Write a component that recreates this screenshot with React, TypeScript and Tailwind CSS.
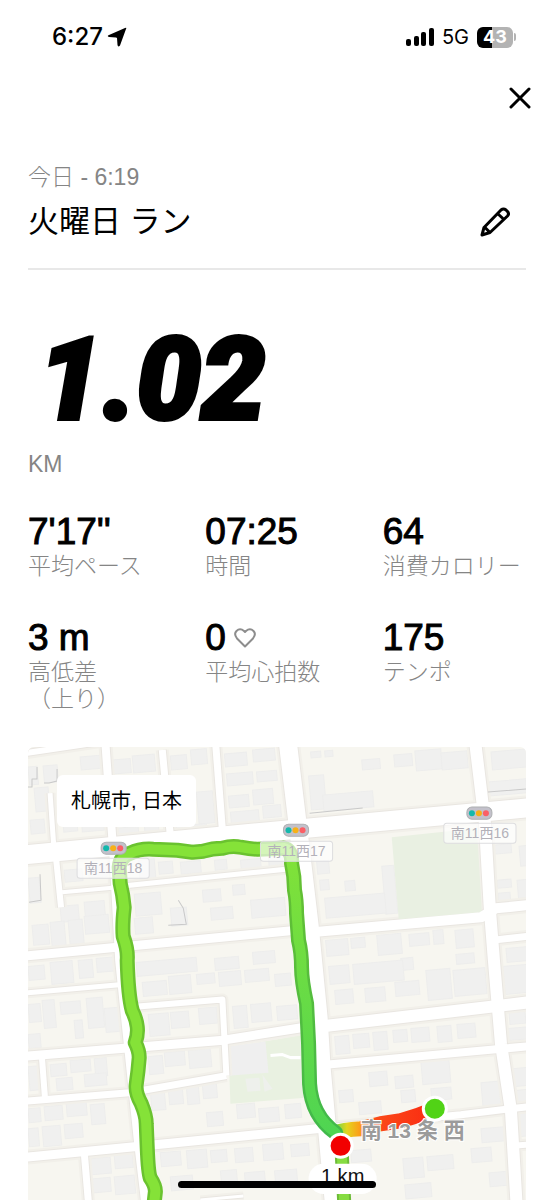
import React from 'react';

const stats = [
  { value: "7'17''", label: ['平均ペース'] },
  { value: '07:25', label: ['時間'] },
  { value: '64', label: ['消費カロリー'] },
  { value: '3 m', label: ['高低差', '（上り）'] },
  { value: '0', label: ['平均心拍数'], heart: true },
  { value: '175', label: ['テンポ'] },
];

// [path, width]
const roads: [string, number][] = [
  ['M20 754L100 742', 6],
  ['M20 855L306 828L535 807', 19],
  ['M105 740L113 850L119 960L138 1143L146 1210', 8],
  ['M162 750L170 835', 7],
  ['M215 740L222 830', 7],
  ['M287 740L299 840L309 925L318 1017L321 1067L326 1123L334 1210', 18],
  ['M474 740L484 823L489 910L493 960L500 1043L510 1110L516 1210', 12],
  ['M50 793L54 850', 5],
  ['M56 858L61 907', 6],
  ['M62 892L118 887', 4],
  ['M120 886L295 868', 5],
  ['M20 956L305 929', 9],
  ['M310 932L480 917L495 908L535 904', 10],
  ['M490 940L535 935', 7],
  ['M20 993L122 984', 5],
  ['M138 1006L222 999L226 1075', 6],
  ['M20 1056L220 1040L315 1025', 9],
  ['M320 1026L535 1001', 12],
  ['M20 1101L129 1092L226 1075', 7],
  ['M42 1058L45 1098', 6],
  ['M325 1064L535 1045', 8],
  ['M20 1157L155 1144L326 1127', 9],
  ['M326 1127L460 1114L535 1105', 7],
  ['M84 1150L89 1210', 7],
  ['M512 1145L535 1143', 6],
  ['M200 1199L243 1195', 3],
];

// [x, y, width, height]
const buildings: number[][] = [
  [28, 767, 9, 18], [43, 766, 14, 17], [34, 788, 14, 24], [60, 784, 16, 22], [80, 757, 20, 13], [30, 820, 14, 14], [62, 812, 14, 20], [80, 806, 22, 26],
  [112, 760, 18, 14], [132, 756, 22, 17], [120, 782, 12, 22], [140, 784, 16, 15], [118, 828, 20, 8], [144, 824, 14, 10],
  [170, 756, 16, 14], [190, 750, 16, 15], [176, 780, 14, 26], [196, 792, 16, 32], [176, 826, 30, 9],
  [224, 754, 22, 13], [252, 750, 22, 12], [226, 774, 26, 12], [256, 772, 20, 10], [228, 796, 20, 12], [252, 790, 20, 15], [230, 812, 28, 13], [262, 806, 18, 12],
  [310, 752, 10, 6], [324, 751, 8, 6], [361, 760, 18, 10], [393, 755, 18, 12], [414, 751, 26, 20], [440, 753, 26, 17], [308, 776, 15, 34], [322, 795, 50, 16],
  [490, 752, 38, 18], [487, 782, 38, 14], [492, 845, 18, 9], [518, 846, 12, 20], [496, 880, 14, 8], [497, 893, 12, 8], [516, 880, 12, 18],
  [316, 861, 12, 13], [319, 880, 9, 10], [344, 881, 10, 10], [381, 866, 12, 48], [324, 898, 60, 20],
  [28, 878, 11, 25], [64, 870, 18, 12], [88, 866, 22, 12], [60, 906, 18, 16], [84, 902, 20, 18], [32, 925, 16, 20], [50, 922, 14, 24], [68, 920, 14, 24], [84, 916, 24, 18],
  [138, 860, 16, 20], [158, 862, 14, 12], [180, 862, 20, 12], [214, 860, 12, 10], [240, 860, 20, 10], [268, 858, 16, 10],
  [134, 894, 26, 22], [170, 908, 16, 18], [202, 890, 18, 12], [210, 908, 22, 12], [250, 900, 34, 18], [134, 918, 18, 16], [232, 885, 12, 10],
  [28, 966, 16, 14], [50, 962, 22, 22], [78, 960, 14, 18], [96, 958, 22, 14], [136, 962, 60, 14], [214, 958, 24, 12], [252, 952, 22, 12],
  [28, 1004, 12, 18], [42, 1000, 12, 28], [60, 1002, 20, 12], [86, 998, 16, 30], [28, 1034, 12, 14], [74, 1020, 8, 18], [104, 1008, 14, 24],
  [142, 982, 24, 14], [168, 976, 22, 18], [196, 974, 18, 10], [218, 972, 22, 14], [244, 970, 24, 12], [274, 974, 16, 12],
  [148, 1014, 20, 22], [170, 1012, 18, 16], [198, 1008, 18, 16], [232, 1006, 14, 22], [250, 1004, 20, 18], [276, 1006, 20, 14],
  [148, 1056, 14, 18], [164, 1052, 20, 14], [188, 1050, 22, 18], [28, 1066, 10, 24], [50, 1064, 16, 12], [70, 1060, 20, 12], [94, 1058, 12, 18], [56, 1078, 16, 12], [84, 1074, 22, 12],
  [150, 1090, 14, 20], [168, 1088, 14, 16], [186, 1086, 12, 18], [202, 1084, 14, 14], [206, 1112, 16, 14], [236, 1104, 18, 14], [258, 1108, 20, 14], [284, 1104, 16, 14],
  [28, 1108, 12, 14], [44, 1106, 18, 14], [66, 1102, 20, 14], [42, 1126, 18, 20], [64, 1124, 18, 14], [28, 1128, 10, 18], [90, 1104, 14, 20],
  [90, 1158, 20, 16], [114, 1154, 18, 14], [92, 1178, 18, 14], [114, 1176, 20, 18], [160, 1152, 20, 14], [186, 1150, 20, 18], [210, 1150, 16, 12], [234, 1148, 18, 14], [262, 1144, 20, 16], [290, 1144, 18, 12],
  [170, 1176, 22, 14], [220, 1170, 16, 14], [244, 1172, 20, 14], [274, 1170, 22, 14],
  [325, 940, 22, 16], [350, 938, 14, 10], [376, 935, 24, 20], [408, 934, 20, 12], [432, 930, 10, 14], [454, 930, 18, 18], [400, 958, 12, 12], [455, 954, 18, 10],
  [328, 966, 20, 18], [352, 964, 50, 20], [364, 988, 20, 14], [334, 990, 18, 14], [394, 982, 24, 14], [425, 970, 24, 30], [452, 970, 32, 26],
  [505, 948, 24, 14], [502, 966, 26, 28], [508, 1012, 16, 12], [506, 1028, 20, 12],
  [334, 1036, 14, 18], [352, 1034, 16, 14], [372, 1032, 14, 18], [392, 1030, 14, 12], [410, 1028, 18, 14], [436, 1026, 14, 16], [456, 1024, 18, 14],
  [368, 1072, 18, 14], [420, 1060, 28, 24], [394, 1076, 18, 12], [338, 1090, 14, 12], [358, 1102, 22, 12], [400, 1090, 14, 12], [430, 1088, 20, 12], [480, 1082, 18, 26], [512, 1068, 14, 18], [512, 1090, 14, 12],
  [402, 1158, 20, 20], [426, 1156, 26, 14], [350, 1150, 20, 12], [480, 1128, 26, 14], [470, 1148, 20, 14], [488, 1172, 24, 14], [404, 1184, 26, 14], [516, 1112, 10, 24],
];

const signals = [[101, 842], [283, 824], [466, 807]];

const crossings = [
  { x: 77, y: 858, name: '南11西18' },
  { x: 260, y: 841, name: '南11西17' },
  { x: 443, y: 823, name: '南11西16' },
];

const routeWest =
  'M153 1210L155 1192Q156 1186 150 1177Q148 1172 147 1147L146 1123Q146 1115 141 1103Q135 1092 136 1084Q138 1070 139 1057Q139 1050 135 1042Q138 1034 137 1026Q136 1018 132 1010Q128 995 127 960Q128 950 123 936Q122 925 124 907Q123 895 120 883L119 867Q120 856 130 853Q140 848 153 849L177 850L192 852L203 851Q212 848 222 848Q232 845 240 847Q250 849 257 849L283 848';
const routeEast =
  'M283 848Q292 850 291 863Q294 876 294 890Q296 900 296 913L298 940Q301 952 301 967Q301 980 306 1003L308 1043L309 1083Q311 1115 335 1132';
const routeStart = 'M335 1132Q342 1129 360 1128L380 1123L400 1120L416 1115L434 1108';

const RunMap = () => (
  <svg
    className="absolute inset-0 h-full w-full"
    viewBox="28 747 497 453"
    preserveAspectRatio="xMinYMin slice"
    role="img"
    aria-label="ランのルート"
  >
    <defs>
      <linearGradient id="east" gradientUnits="userSpaceOnUse" x1="0" y1="848" x2="0" y2="1132">
        <stop offset="0" stopColor="#82e238" />
        <stop offset="1" stopColor="#4fd552" />
      </linearGradient>
      <linearGradient id="eastEdge" gradientUnits="userSpaceOnUse" x1="0" y1="848" x2="0" y2="1132">
        <stop offset="0" stopColor="#68c030" />
        <stop offset="1" stopColor="#41b94b" />
      </linearGradient>
      <linearGradient id="start" gradientUnits="userSpaceOnUse" x1="332" y1="0" x2="434" y2="0">
        <stop offset="0" stopColor="#4fd552" />
        <stop offset="0.14" stopColor="#e3d51f" />
        <stop offset="0.26" stopColor="#fba01a" />
        <stop offset="0.42" stopColor="#fb4a18" />
        <stop offset="1" stopColor="#fa2a12" />
      </linearGradient>
    </defs>

    <rect x="28" y="747" width="900" height="900" fill="#f7f6f0" />
    <path d="M228 1047L304 1034L305 1097L230 1103Z" fill="#e9f1e1" />
    <path d="M226 1046L265 1041L268 1072L228 1075Z" fill="#efefef" />
    <path d="M245 1078l14 -1l1 13l-13 1ZM262 1074l10 14l-8 3Z" fill="#eef0ec" />
    {buildings.map(([x, y, w, h], i) => (
      <rect key={i} x={x} y={y} width={w} height={h} fill="#f0f0ef" stroke="#ededec" strokeWidth="1" transform={`rotate(-5 ${x} ${y})`} />
    ))}
    <g fill="none" strokeLinejoin="round">
      {roads.map(([d, w], i) => <path key={i} d={d} stroke="#f2f0ea" strokeWidth={w + 6} />)}
      {roads.map(([d, w], i) => <path key={i} d={d} stroke="#e9e6e1" strokeWidth={w + 2} />)}
      <path d="M391 837L476 828L481 912L398 919Z" fill="#e9f0e2" />
      {roads.map(([d, w], i) => <path key={i} d={d} stroke="#ffffff" strokeWidth={w} />)}
      <path d="M270 1055l12 -1l8 3h10" stroke="#ffffff" strokeWidth="3" />
      <path d="M28 787h4v-8h5v-12M44 783h5l8 -2v-12M40 874l1 26l-12 2M309 813L362 808M487 792L525 789M168 925l18 -1l-3 -16l-5 -8" stroke="#c9c9c9" strokeWidth="1" />
    </g>

    <g fill="none" strokeLinecap="round" strokeLinejoin="round">
      <path d="M341 1150L344 1210" stroke="#6dbb38" strokeWidth="14" />
      <path d="M341 1150L344 1210" stroke="#86dc42" strokeWidth="10" />
      <path d={routeStart} stroke="url(#start)" strokeWidth="15" />
      <path d={routeWest} stroke="#6ac22f" strokeWidth="15" />
      <path d={routeEast} stroke="url(#eastEdge)" strokeWidth="15" />
      <path d={routeWest} stroke="#85e238" strokeWidth="10" />
      <path d={routeEast} stroke="url(#east)" strokeWidth="10" />
    </g>

    {crossings.map((c) => (
      <g key={c.name}>
        <rect x={c.x} y={c.y} width="72" height="20" rx="3" fill="#ffffff" fillOpacity="0.65" stroke="#dddddf" />
        <text x={c.x + 36} y={c.y + 15} textAnchor="middle" fontSize="14" fill="#b3b1b9">{c.name}</text>
      </g>
    ))}
    {signals.map(([x, y]) => (
      <g key={x}>
        <rect x={x} y={y} width="25" height="12" rx="5" fill="#c3c1cb" stroke="#aeb0b2" />
        <circle cx={x + 5} cy={y + 6} r="3" fill="#14b8ac" />
        <circle cx={x + 12} cy={y + 6} r="3" fill="#f7b118" />
        <circle cx={x + 19} cy={y + 6} r="3" fill="#fb5f66" />
      </g>
    ))}

    <text x="360" y="1137" fontSize="21" fontWeight="700" fill="#9b9b9b" stroke="#ffffff" strokeWidth="2" paintOrder="stroke">南 13 条 西</text>
    <circle cx="434" cy="1108" r="13" fill="#ffffff" />
    <circle cx="434" cy="1108" r="10" fill="#51d316" />
    <rect x="308" y="1163" width="68" height="30" rx="15" fill="#ffffff" />
    <text x="342" y="1182" textAnchor="middle" fontSize="20" fill="#111111">1 km</text>
    <circle cx="340" cy="1145" r="13" fill="#ffffff" />
    <circle cx="340" cy="1145" r="10" fill="#f20000" />
  </svg>
);

const StatusBar = () => (
  <div className="flex h-[74px] items-center justify-between pl-[52px] pr-[38px] font-['Inter','Liberation_Sans',sans-serif]">
    <div className="flex items-center gap-1">
      <span className="text-2xl font-medium">6:27</span>
      <svg width="20" height="20" viewBox="0 0 20 20" aria-hidden="true">
        <path d="M18 1Q20 0 19 2L13 18.500Q11 20.500 10.500 18L10 11Q9.500 10.500 9 10.500L2 10Q-0.500 9 2 8Z" />
      </svg>
    </div>
    <div className="flex items-center gap-2">
      <svg width="28" height="18" viewBox="0 0 28 18" aria-hidden="true">
        <rect x="0" y="11" width="5" height="7" rx="2" />
        <rect x="8" y="8" width="5" height="10" rx="2" />
        <rect x="15" y="4" width="5" height="14" rx="2" />
        <rect x="23" y="0" width="5" height="18" rx="2" />
      </svg>
      <span className="text-xl">5G</span>
      <div className="flex items-center gap-px">
        <span className="flex h-[21px] w-[36px] items-center justify-center rounded-md bg-linear-to-r from-black from-43% to-[#b3b3b3] to-43% text-lg font-bold text-white">43</span>
        <span className="h-2 w-0.5 rounded-r-full bg-[#b3b3b3]" />
      </div>
    </div>
  </div>
);

export default function App() {
  return (
    <main className="flex min-h-screen flex-col bg-white font-['Liberation_Sans','Noto_Sans_CJK_JP',sans-serif] text-black">
      <StatusBar />
      <div className="flex justify-end pr-5">
        <button type="button" aria-label="閉じる" className="flex h-12 w-7 items-center justify-center">
          <svg width="22" height="22" viewBox="0 0 22 22" fill="none" stroke="currentColor" strokeWidth="3" strokeLinecap="round">
            <path d="M2 2L20 20M20 2L2 20" />
          </svg>
        </button>
      </div>

      <header className="mx-7 mt-10 border-b-2 border-[#e8e8e8] pb-4">
        <p className="text-[23px] leading-[30px] font-light text-[#858585]">今日 - 6:19</p>
        <div className="flex items-center justify-between pr-4">
          <h1 className="text-[31px] leading-[60px]">火曜日 ラン</h1>
          <button type="button" aria-label="編集">
            <svg width="30" height="30" viewBox="0 0 30 30" fill="none" stroke="currentColor" strokeWidth="3" strokeLinejoin="round">
              <path d="M2 28L4 20.500L21 3Q23.500 1 26 3L27.500 4.500Q29.500 7 27.500 9L10 25.500ZM5 20.500L10 25.500M17.500 6.500L24 12.500" />
            </svg>
          </button>
        </div>
      </header>

      <section className="mx-7 mt-[50px]">
        <p className="pl-2.5 font-['Roboto',sans-serif] text-[115px] leading-[120px] font-black italic [-webkit-text-stroke:4px]">1.02</p>
        <p className="mt-2.5 text-[23px] leading-[28px] text-[#858585]">KM</p>
      </section>

      <dl className="mt-8 ml-7 grid grid-cols-3 gap-x-1.5 gap-y-9">
        {stats.map((s) => (
          <div key={s.label[0]} className="flex flex-col-reverse justify-end">
            <dt className="text-[23px] leading-[27px] font-light whitespace-nowrap text-[#858585]">
              {s.label.map((line) => <span key={line} className="block">{line}</span>)}
            </dt>
            <dd className="flex items-center gap-2 text-[37px] leading-[43px] [-webkit-text-stroke:1px]">
              {s.value}
              {s.heart && (
                <svg width="22" height="20" viewBox="0 0 22 20" fill="none" stroke="#8d8d8d" strokeWidth="2" strokeLinejoin="round" aria-hidden="true">
                  <path d="M11 18.500L3 10.500Q-0.500 6 2.500 3Q6 -0.500 10 3L11 4L12 3Q16 -0.500 19.500 3Q22.500 6 19 10.500Z" />
                </svg>
              )}
            </dd>
          </div>
        ))}
      </dl>

      <section className="relative mx-7 mt-[34px] min-h-[400px] flex-1 overflow-hidden rounded-t-md">
        <RunMap />
        <p className="absolute top-7 left-[29px] rounded-md bg-white px-3.5 py-3 text-xl leading-[28px]">札幌市, 日本</p>
      </section>

      <div className="fixed bottom-3 left-1/2 h-[7px] w-[198px] -translate-x-1/2 rounded-full bg-black" />
    </main>
  );
}
